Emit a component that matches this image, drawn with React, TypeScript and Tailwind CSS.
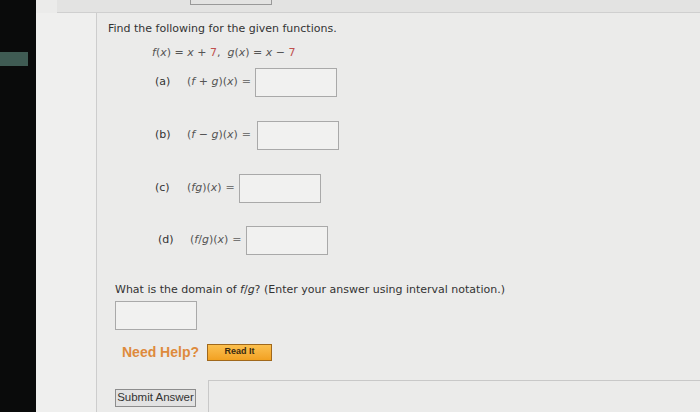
import React from "react";

const verdana = { fontFamily: '"DejaVu Sans", Verdana, sans-serif' };
const arial = { fontFamily: '"Liberation Sans", Arial, sans-serif' };

function AnswerBox({ className = "" }: { className?: string }) {
  return <div className={`h-[29px] w-[82px] border border-[#a9a9a9] bg-[#f1f1f0] ${className}`} />;
}

function Part({ label, expr, ml, boxMl, mt }: { label: string; expr: React.ReactNode; ml: string; boxMl: string; mt: string }) {
  return (
    <div className={`flex items-center ${ml} ${mt}`}>
      <span className="w-[32px]">({label})</span>
      <span className="text-[#555]">{expr}</span>
      <span className="ml-[4px] text-[#777]">=</span>
      <AnswerBox className={boxMl} />
    </div>
  );
}

export default function App() {
  return (
    <div className="flex h-[412px] w-[700px] overflow-hidden bg-[#ebebea] text-[#333]" style={verdana}>
      <div className="w-[36px] shrink-0 bg-[#0a0b0b]">
        <div className="mt-[52px] h-[14px] w-[28px] bg-[#3f5b53]" />
      </div>
      <div className="flex flex-1 flex-col">
        <div className="ml-[21px] h-[13px] shrink-0 border-b border-[#cfcfcf] bg-[#e3e3e2]">
          <div className="ml-[133px] h-[5px] w-[82px] border-x border-b border-[#999]" />
        </div>
        <div className="flex flex-1">
          <div className="w-[60px] shrink-0 bg-[#efefee]" />
          <div className="flex flex-1 flex-col border-l border-[#cdcdcd] text-[11px]">
            <div className="ml-[11px] mt-[8px]">Find the following for the given functions.</div>
            <div className="ml-[55px] mt-[7px] text-[#555]">
              <i>f</i>(<i>x</i>) = <i>x</i> + <span className="text-[#c0504d]">7</span>,&nbsp; <i>g</i>(<i>x</i>) = <i>x</i> − <span className="text-[#c0504d]">7</span>
            </div>
            <Part label="a" ml="ml-[58px]" mt="mt-[7px]" boxMl="ml-[4px]" expr={<>(<i>f</i> + <i>g</i>)(<i>x</i>)</>} />
            <Part label="b" ml="ml-[58px]" mt="mt-[24px]" boxMl="ml-[6px]" expr={<>(<i>f</i> − <i>g</i>)(<i>x</i>)</>} />
            <Part label="c" ml="ml-[58px]" mt="mt-[24px]" boxMl="ml-[4px]" expr={<>(<i>fg</i>)(<i>x</i>)</>} />
            <Part label="d" ml="ml-[61px]" mt="mt-[23px]" boxMl="ml-[4px]" expr={<>(<i>f</i>/<i>g</i>)(<i>x</i>)</>} />
            <div className="ml-[18px] mt-[27px]">
              What is the domain of <i>f</i>/<i>g</i>? (Enter your answer using interval notation.)
            </div>
            <AnswerBox className="ml-[18px] mt-[2px] h-[28px]" />
            <div className="ml-[25px] mt-[12px] flex items-center" style={arial}>
              <span className="text-[14px] font-bold text-[#de8a3c]">Need Help?</span>
              <span className="ml-[8px] flex h-[17px] w-[65px] items-center justify-center border border-[#a0681c] bg-gradient-to-b from-[#fbc04e] to-[#f2a120] text-[9px] font-bold text-[#3a2a10]">
                Read It
              </span>
            </div>
            <div className="mt-[17px] flex flex-1">
              <div className="ml-[18px] mt-[9px] flex h-[18px] w-[81px] items-center justify-center whitespace-nowrap border border-[#8d8d8d] bg-[#e2e2e2] text-[11.5px] text-[#333]" style={arial}>
                Submit Answer
              </div>
              <div className="ml-[12px] flex-1 border-l border-t border-[#c8c8c8]" />
            </div>
          </div>
        </div>
      </div>
    </div>
  );
}
